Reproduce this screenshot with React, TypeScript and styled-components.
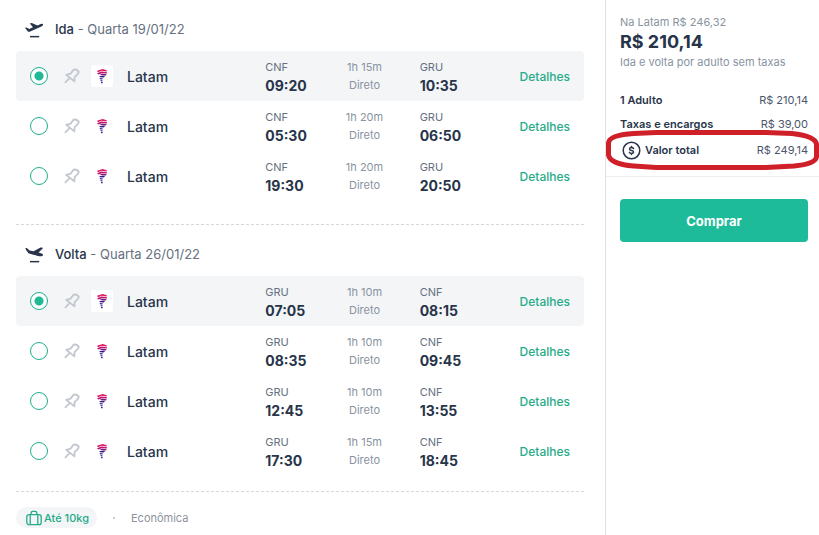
import React from 'react';
import styled, { createGlobalStyle } from 'styled-components';

const Global = createGlobalStyle`
  *, *::before, *::after { box-sizing: border-box; }
  body { margin: 0; background: #fff; font-family: Inter, "Open Sans", sans-serif; color: #273449; }
`;

const Page = styled.div`
  display: flex;
  min-height: 100vh;
`;

const Flights = styled.main`
  flex: 1;
  min-width: 0;
  padding: 0 21px 0 16px;
`;

const Leg = styled.form<{ $top: number; $bottom: number }>`
  border-bottom: 1px dashed #d5d8dc;
  padding-top: ${(p) => p.$top}px;
  padding-bottom: ${(p) => p.$bottom}px;
`;

const LegTitle = styled.h2`
  display: flex;
  align-items: center;
  gap: 11px;
  height: 45px;
  margin: 0;
  padding-left: 8px;
  font-size: 13px;
  line-height: 20px;
  font-weight: 400;
  color: #667080;

  svg { width: 20px; height: 20px; }
  strong { font-weight: 500; color: #273449; }
`;

const Row = styled.div<{ $selected: boolean }>`
  display: grid;
  grid-template-columns: 34px 27px 36px 138fr 44fr 110fr 99fr 51fr;
  align-items: center;
  height: 50px;
  padding: 0 14px;
  border-radius: 4px;
  white-space: nowrap;
  background: ${(p) => (p.$selected ? '#f3f5f7' : '#fff')};

  & > * { min-width: 0; }
`;

const Radio = styled.input`
  appearance: none;
  width: 18px;
  height: 18px;
  margin: 0;
  border: 1px solid #1fae8d;
  border-radius: 50%;
  background: #fff;

  &:checked { background: radial-gradient(circle, #1fb996 0 4px, #fff 5px); }
`;

const PinButton = styled.button`
  width: 16px;
  height: 16px;
  padding: 0;
  border: 0;
  background: none;
  svg { display: block; }
`;

const Logo = styled.span`
  display: grid;
  place-items: center;
  width: 22px;
  height: 22px;
  border-radius: 2px;
  background: #fff;
`;

const Airline = styled.label`
  font-size: 14px;
  font-weight: 500;
`;

const Stop = styled.div`
  padding-top: 2px;
  font-size: 11px;
  line-height: 18px;
  color: #667080;

  time {
    display: block;
    font-size: 14px;
    line-height: 20px;
    font-weight: 700;
    color: #273449;
  }
`;

const Duration = styled.div`
  font-size: 11px;
  line-height: 18px;
  text-align: center;
  color: #8993a1;
`;

const Details = styled.a`
  justify-self: end;
  font-size: 12px;
  font-weight: 500;
  color: #27ab89;
  text-decoration: none;
`;

const Footer = styled.footer`
  display: flex;
  align-items: center;
  gap: 16px;
  margin-top: 15px;
  font-size: 11px;
  line-height: 16px;
  color: #8d939c;
`;

const Baggage = styled.span`
  display: flex;
  align-items: center;
  gap: 2px;
  height: 21px;
  padding: 0 8px 0 10px;
  border-radius: 11px;
  background: #f3f5f7;
  color: #27ab89;
  font-weight: 500;
`;

const Dot = styled.i`
  width: 2px;
  height: 2px;
  border-radius: 50%;
  background: #b4b9c0;
`;

const Summary = styled.aside`
  width: 214px;
  border-left: 1px solid #dfe2e5;
`;

const Prices = styled.section`
  padding: 13px 11px 12px 14px;
  border-bottom: 1px solid #eceef0;
`;

const Note = styled.p`
  margin: 0;
  font-size: 11px;
  line-height: 18px;
  color: #8993a1;
  white-space: nowrap;
`;

const Price = styled.p`
  margin: 0;
  font-size: 18px;
  line-height: 22px;
  font-weight: 700;
`;

const Lines = styled.dl`
  margin: 17px 0 0;
`;

const Line = styled.div`
  position: relative;
  display: flex;
  align-items: center;
  justify-content: space-between;
  height: 24px;
  font-size: 11px;

  dt { display: flex; align-items: center; gap: 4px; font-weight: 600; }
  dd { margin: 0; color: #4b5669; }
`;

const TotalLine = styled(Line)`
  height: 28px;
  dt { padding-left: 2px; }
`;

const Circled = styled.svg`
  position: absolute;
  left: -14px;
  top: -6px;
  width: calc(100% + 25px);
  height: 40px;
  pointer-events: none;
`;

const BuyButton = styled.button`
  display: block;
  width: calc(100% - 25px);
  height: 43px;
  margin: 22px 11px 0 14px;
  border: 0;
  border-radius: 4px;
  background: #1dbb99;
  color: #fff;
  font: 700 13px/20px Inter, "Open Sans", sans-serif;
`;

function PlaneIcon({ landing }: { landing?: boolean }) {
  return (
    <svg viewBox="0 0 20 20" fill="#273449" aria-hidden="true">
      {landing ? (
        <path d="M1.2 4.2 L2.8 4 L5.6 6.4 L9.6 7.2 L16.6 3.6 Q18.6 3 18.9 4.2 L14.6 8.6 L18.2 9.8 Q19.6 10.8 18.4 11.9 Q16.8 12.6 14 11.9 L5 9.4 Q3.6 8.8 1.2 4.2 Z" />
      ) : (
        <path d="M1 8.8 L2.6 8.4 L5.2 10 L9 8.3 L5.8 4.6 L7.8 4 L13.4 6.6 L16.8 5 Q18.8 4.4 19.2 5.6 Q19.2 6.8 17.4 7.6 L6.2 12.6 Q4.6 13.2 3.6 12.2 Z" />
      )}
      <path d="M6 16.9 H15.2 V18.4 H6 Z" />
    </svg>
  );
}

function PinIcon() {
  return (
    <svg width="16" height="16" viewBox="0 0 16 16" fill="none" stroke="#c3c8d0" strokeWidth="1.8" strokeLinejoin="round" strokeLinecap="round">
      <path d="M9.6 1.6 Q12.6 1 14.8 3.6 Q14.6 5.4 13.2 6.6 L10.6 9.2 L10.4 13.4 L2.2 6.8 L6.6 5.6 Z M5.6 10.2 L1.4 14.4" />
    </svg>
  );
}

function LatamLogo() {
  return (
    <svg width="12" height="16" viewBox="0 0 12 16" aria-hidden="true">
      <path d="M1 2.8 L6.6 1 L10.8 2.2 L10.6 3.4 L5.6 2.8 L2 4.2 Z" fill="#e01660" />
      <path d="M1 5.2 L5.6 3.6 L11 4.2 L10.8 5.6 L6 5.2 L2.4 6.6 Z" fill="#c01570" />
      <path d="M3.6 6.8 L6.4 5.8 L10.8 6.2 L9.8 7.6 L6.4 7.4 Z" fill="#701c83" />
      <path d="M3.2 8 L9.2 8 L7.6 9.4 L4.2 9.2 Z" fill="#3a1888" />
      <path d="M3.6 10 L7 10.4 L6.4 11.6 L4 11.2 Z M4.4 12 L6.6 12.4 L6.4 13.4 L4.8 13.2 Z M5 14 H6.6 V15.2 H5.2 Z" fill="#2a178c" />
    </svg>
  );
}

function BagIcon() {
  return (
    <svg width="16" height="16" viewBox="0 0 16 16" fill="none" stroke="#27ab89" strokeWidth="1.3" aria-hidden="true">
      <rect x="0.8" y="4.6" width="14.4" height="10" rx="2.2" />
      <path d="M4.2 14.6 V4.6 M11.8 4.6 V14.6 M5.2 4.6 V3 Q5.2 1.4 6.8 1.4 H9.2 Q10.8 1.4 10.8 3 V4.6" />
    </svg>
  );
}

function CoinIcon() {
  return (
    <svg width="19" height="19" viewBox="0 0 19 19" fill="none" stroke="#273449" strokeWidth="1.5" strokeLinecap="round" aria-hidden="true">
      <circle cx="9.5" cy="9.5" r="8.3" />
      <path d="M11.5 7.6 Q11 6.6 9.5 6.6 Q7.6 6.6 7.6 7.9 Q7.6 9.2 9.5 9.5 Q11.5 9.8 11.5 11.1 Q11.5 12.4 9.5 12.4 Q7.9 12.4 7.4 11.4 M9.5 5.5 V6.6 M9.5 12.4 V13.5" />
    </svg>
  );
}

type Flight = { leave: string; length: string; arrive: string };

const outbound: Flight[] = [
  { leave: '09:20', length: '1h 15m', arrive: '10:35' },
  { leave: '05:30', length: '1h 20m', arrive: '06:50' },
  { leave: '19:30', length: '1h 20m', arrive: '20:50' },
];

const inbound: Flight[] = [
  { leave: '07:05', length: '1h 10m', arrive: '08:15' },
  { leave: '08:35', length: '1h 10m', arrive: '09:45' },
  { leave: '12:45', length: '1h 10m', arrive: '13:55' },
  { leave: '17:30', length: '1h 15m', arrive: '18:45' },
];

type LegProps = {
  name: string;
  date: string;
  from: string;
  to: string;
  flights: Flight[];
  landing?: boolean;
  top: number;
  bottom: number;
};

function FlightLeg({ name, date, from, to, flights, landing, top, bottom }: LegProps) {
  const [selected, setSelected] = React.useState(0);
  return (
    <Leg $top={top} $bottom={bottom}>
      <LegTitle>
        <PlaneIcon landing={landing} />
        <span><strong>{name}</strong> - {date}</span>
      </LegTitle>
      {flights.map((f, i) => (
        <Row key={f.leave} $selected={i === selected}>
          <Radio type="radio" name={name} id={`${name}-${i}`} checked={i === selected} onChange={() => setSelected(i)} />
          <PinButton type="button" aria-label="Fixar"><PinIcon /></PinButton>
          <Logo><LatamLogo /></Logo>
          <Airline htmlFor={`${name}-${i}`}>Latam</Airline>
          <Stop>{from}<time>{f.leave}</time></Stop>
          <Duration>{f.length}<br />Direto</Duration>
          <Stop>{to}<time>{f.arrive}</time></Stop>
          <Details href="#detalhes">Detalhes</Details>
        </Row>
      ))}
    </Leg>
  );
}

export default function App() {
  return (
    <>
      <Global />
      <Page>
        <Flights>
          <FlightLeg name="Ida" date="Quarta 19/01/22" from="CNF" to="GRU" flights={outbound} top={6} bottom={23} />
          <FlightLeg name="Volta" date="Quarta 26/01/22" from="GRU" to="CNF" flights={inbound} landing top={6} bottom={15} />
          <Footer>
            <Baggage><BagIcon />Até 10kg</Baggage>
            <Dot />
            <span>Econômica</span>
          </Footer>
        </Flights>
        <Summary>
          <Prices>
            <Note>Na Latam R$ 246,32</Note>
            <Price>R$ 210,14</Price>
            <Note>Ida e volta por adulto sem taxas</Note>
            <Lines>
              <Line><dt>1 Adulto</dt><dd>R$ 210,14</dd></Line>
              <Line><dt>Taxas e encargos</dt><dd>R$ 39,00</dd></Line>
              <TotalLine>
                <dt><CoinIcon />Valor total</dt>
                <dd>R$ 249,14</dd>
                <Circled viewBox="0 0 213 40" preserveAspectRatio="none" fill="none" stroke="#cf202a" strokeWidth="5" aria-hidden="true">
                  <path d="M28 3.5 Q3 5 2.5 13 V25 Q4 34 28 36 L50 37.5 H160 L188 36 Q209 34 210.5 27 V14 Q209 6 186 3.5 L160 2.5 H50 Z" />
                </Circled>
              </TotalLine>
            </Lines>
          </Prices>
          <BuyButton type="button">Comprar</BuyButton>
        </Summary>
      </Page>
    </>
  );
}
